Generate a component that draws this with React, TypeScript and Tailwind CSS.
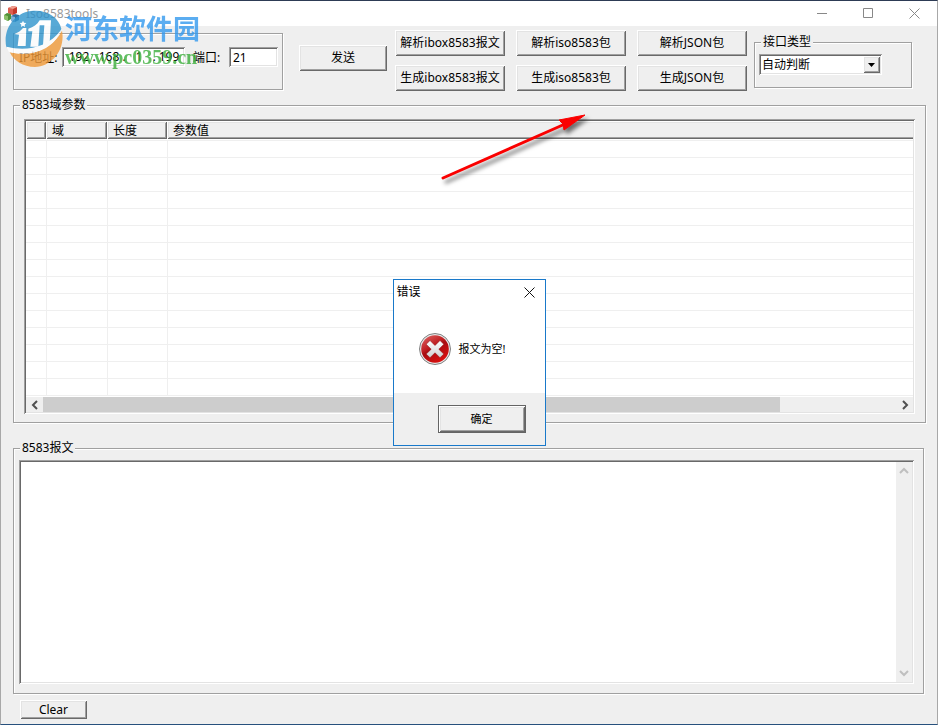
import React, { useState } from 'react';
import clsx from 'clsx';

const ROW_COUNT = 15;
const IFACE_TYPES = ['自动判断', 'ibox8583', 'iso8583', 'JSON'];

// classic 3D edges
const RAISED =
  'bg-[#efefef] shadow-[inset_1px_1px_#fff,inset_-1px_-1px_#696969,inset_2px_2px_#e3e3e3,inset_-2px_-2px_#a0a0a0]';
const SUNKEN =
  'bg-white shadow-[inset_1px_1px_#a0a0a0,inset_-1px_-1px_#fff,inset_2px_2px_#696969,inset_-2px_-2px_#e3e3e3]';
const ETCHED = 'border border-[#a0a0a0] shadow-[inset_1px_1px_#fff,1px_1px_#fff]';

type ButtonProps = React.ButtonHTMLAttributes<HTMLButtonElement>;

const PushButton: React.FC<ButtonProps> = ({ className, children, ...rest }) => (
  <button
    type="button"
    className={clsx('flex items-center justify-center whitespace-nowrap', RAISED, className)}
    {...rest}
  >
    {children}
  </button>
);

const GroupBox: React.FC<{ title?: string; className?: string; children: React.ReactNode }> = ({
  title,
  className,
  children,
}) => (
  <fieldset className={clsx('min-w-0', ETCHED, className)}>
    {title && <legend className="ml-[6px] h-4 bg-[#efefef] px-[2px] leading-4">{title}</legend>}
    {children}
  </fieldset>
);

const Chevron: React.FC<{ d: string; color: string }> = ({ d, color }) => (
  <svg width="10" height="10" viewBox="0 0 10 10" fill="none" stroke={color} strokeWidth="2">
    <path d={d} />
  </svg>
);

const AppIcon = () => (
  <svg width="16" height="16" viewBox="0 0 16 16" className="shrink-0">
    <path d="M4 2l5-2 4 1v6l-4 2-5-2z" fill="#c5382b" />
    <path d="M4 2l5 1v6L4 7z" fill="#dc5f50" />
    <path d="M4 2l5-2 4 1-4 2z" fill="#f0a090" />
    <path d="M0 9l3-2 4 1v5l-3 2-4-2z" fill="#4f8f35" />
    <path d="M0 9l4 1v5l-4-2z" fill="#8cc069" />
    <path d="M7 10l4-2 4 1v5l-4 2-4-1z" fill="#2f6c9e" />
    <path d="M7 10l4 1v5l-4-1z" fill="#7db0d8" />
  </svg>
);

const ErrorIcon = () => (
  <svg width="32" height="32" viewBox="0 0 32 32" className="shrink-0">
    <defs>
      <linearGradient id="err" x1="0" y1="0" x2="0.6" y2="1">
        <stop offset="0" stopColor="#e06a6a" />
        <stop offset="0.45" stopColor="#c01f22" />
        <stop offset="0.55" stopColor="#a80d10" />
        <stop offset="1" stopColor="#d81010" />
      </linearGradient>
      <linearGradient id="errx" x1="0" y1="0" x2="0" y2="1">
        <stop offset="0" stopColor="#ffffff" />
        <stop offset="1" stopColor="#cfcfcf" />
      </linearGradient>
    </defs>
    <circle cx="16" cy="16" r="15.5" fill="#e8e8e8" stroke="#808080" />
    <circle cx="16" cy="16" r="13.8" fill="url(#err)" />
    <path
      d="M11 7.5l5 5 5-5 3.8 3.8-5 4.9 5 4.9-3.8 3.6-5-4.9-5 4.9-3.8-3.6 5-4.9-5-4.9z"
      fill="url(#errx)"
      stroke="#8c1012"
      strokeWidth="0.5"
    />
  </svg>
);

const SiteLogo = () => (
  <svg width="58" height="58" viewBox="0 0 174 174" className="shrink-0">
    <path d="M86 2C130 0 162 24 169 56C160 84 138 104 110 114C76 124 40 120 4 112C-8 54 32 4 86 2z" fill="#2f94cd" />
    <path d="M171 62C182 120 140 170 90 171C54 171 26 152 14 126C76 142 142 118 171 62z" fill="#f09a38" />
    <path d="M28 72C40 68 48 62 54 54L64 54L62 108L38 108L42 74z" fill="#fff" />
    <path d="M70 56C86 52 96 44 104 31L138 31L134 98L114 106L118 46L104 46L100 110L76 110L82 64L70 64z" fill="#fff" />
    <path d="M4 110C60 124 126 116 168 60C146 122 74 142 12 126z" fill="#fff" />
    <path d="M54 32l3 6 7 1-5 5 1 7-6-4-6 4 1-7-5-5 7-1z" fill="#fff" />
  </svg>
);

const Watermark = () => (
  <div className="pointer-events-none absolute top-[9px] left-1 z-20 flex select-none opacity-80">
    <SiteLogo />
    <div className="ml-[2px] flex flex-col pt-px">
      <span className="h-9 text-[27px] leading-9 font-bold whitespace-nowrap text-[#3399ee]">河东软件园</span>
      <span className="font-['Liberation_Serif',serif] text-[20px] leading-5 font-bold text-[#3aae3a]">
        www.pc0359.cn
      </span>
    </div>
  </div>
);

const RedArrow = () => (
  <svg
    width="160"
    height="80"
    viewBox="0 0 160 80"
    className="pointer-events-none absolute top-[107px] left-[434px] z-10 drop-shadow-[3px_4px_2px_rgba(0,0,0,0.55)]"
  >
    <path d="M8 70L130 16" stroke="#fa0000" strokeWidth="3" strokeLinecap="round" />
    <path d="M150 7L124 12L128 16L129 22z" fill="#fa0000" stroke="#fa0000" strokeLinejoin="round" />
  </svg>
);

const TitleBar = () => (
  <header className="flex h-[25px] items-center bg-white pl-[3px] text-[#999]">
    <AppIcon />
    <h1 className="ml-[6px] flex-1">Iso8583tools</h1>
    <button type="button" aria-label="最小化" className="flex h-full w-[46px] items-center justify-center">
      <svg width="11" height="11" stroke="#888"><path d="M0 5.5H10" /></svg>
    </button>
    <button type="button" aria-label="最大化" className="flex h-full w-[46px] items-center justify-center">
      <svg width="11" height="11" stroke="#888" fill="none"><path d="M.5 .5H9.5V9.5H.5z" /></svg>
    </button>
    <button type="button" aria-label="关闭" className="flex h-full w-[46px] items-center justify-center">
      <svg width="11" height="11" stroke="#888"><path d="M.5 .5L10.5 10.5M10.5 .5L.5 10.5" /></svg>
    </button>
  </header>
);

const IpField = () => {
  const [octets, setOctets] = useState(['192', '168', '1', '199']);

  return (
    <div className={clsx('flex h-5 w-[123px] items-center p-[2px] pl-1', SUNKEN)}>
      {octets.map((octet, i) => (
        <React.Fragment key={i}>
          {i > 0 && <span className="w-1 text-center">.</span>}
          <input
            id={`ip-${i}`}
            aria-label={`IP ${i + 1}`}
            className="w-[26px] min-w-0 bg-transparent text-center leading-4 outline-none"
            maxLength={3}
            value={octet}
            onChange={e => setOctets(octets.map((o, n) => (n === i ? e.target.value : o)))}
          />
        </React.Fragment>
      ))}
    </div>
  );
};

const FieldTable = () => (
  <div className={clsx('p-[2px]', SUNKEN)}>
    <table className="mb-px w-full table-fixed border-separate border-spacing-0">
      <colgroup>
        <col className="w-5" />
        <col className="w-[61px]" />
        <col className="w-[60px]" />
        <col />
      </colgroup>
      <thead>
        <tr>
          {['', '域', '长度', '参数值'].map(name => (
            <th key={name} className="group overflow-hidden p-0 pb-px text-left font-normal">
              {/* the last column runs on past the visible area */}
              <div
                className={clsx(
                  'h-[18px] overflow-hidden pt-[2px] pl-[6px] leading-4 group-last:-mr-1',
                  RAISED,
                )}
              >
                {name}
              </div>
            </th>
          ))}
        </tr>
      </thead>
      <tbody>
        {Array.from({ length: ROW_COUNT }, (_, row) => (
          <tr key={row} className="group">
            {[0, 1, 2, 3].map(col => (
              <td
                key={col}
                className="h-[17px] border-t border-l border-[#efefef] p-0 first:border-l-0 group-last:h-[18px] group-last:border-b"
              />
            ))}
          </tr>
        ))}
      </tbody>
    </table>
    <div className="flex h-[15px] bg-[#efefef]">
      <button type="button" aria-label="向左滚动" className="flex w-[17px] items-center justify-center">
        <Chevron d="M7 1L3 5L7 9" color="#505050" />
      </button>
      <div className="flex-1">
        <div className="h-full w-[86.4%] bg-[#cdcdcd]" />
      </div>
      <button type="button" aria-label="向右滚动" className="flex w-[17px] items-center justify-center">
        <Chevron d="M3 1L7 5L3 9" color="#505050" />
      </button>
    </div>
  </div>
);

const ErrorDialog: React.FC<{ onClose: () => void }> = ({ onClose }) => (
  <div className="absolute inset-0 z-30 flex items-center justify-center">
    <div role="alertdialog" aria-labelledby="dlg-title" className="w-[153px] border border-[#1979ca] bg-white">
      <div className="flex h-6 items-center justify-between pl-[3px]">
        <h2 id="dlg-title">错误</h2>
        <button type="button" aria-label="关闭" className="flex h-6 w-[30px] items-center justify-center" onClick={onClose}>
          <svg width="11" height="11" stroke="#111"><path d="M.5 .5L10.5 10.5M10.5 .5L.5 10.5" /></svg>
        </button>
      </div>
      <div className="flex h-[89px] items-center gap-2 pl-[25px] text-[11px]">
        <ErrorIcon />
        <p>报文为空!</p>
      </div>
      <div className="flex justify-end bg-[#efefef] py-3 pr-[19px] text-[11px]">
        <div className="border border-[#646464]">
          <PushButton className="h-[26px] w-[86px]" onClick={onClose}>确定</PushButton>
        </div>
      </div>
    </div>
  </div>
);

const App: React.FC = () => {
  const [iface, setIface] = useState(IFACE_TYPES[0]);
  const [port, setPort] = useState('21');
  const [message, setMessage] = useState('');
  const [showError, setShowError] = useState(true);

  const submit = () => {
    if (!message) setShowError(true);
  };

  return (
    <div className="relative flex min-h-screen flex-col overflow-hidden border border-t-[#2d3b55] border-r-[#a8a8a8] border-b-[#27507d] border-l-[#a8a8a8] bg-[#efefef] font-['Noto_Sans','Noto_Sans_CJK_SC',sans-serif] text-[12px] leading-4 text-black">
      <TitleBar />

      <main className="flex flex-1 flex-col pr-[11px] pb-[5px] pl-3">
        <div className="flex items-start pt-1">
          <GroupBox className="mt-[3px] h-[57px] w-[270px]">
            <div className="flex items-center pt-[13px] pl-[5px]">
              <label htmlFor="ip-0" className="w-[43px] pt-[2px]">IP地址:</label>
              <IpField />
              <label htmlFor="port" className="ml-2 w-9 pt-[2px]">端口:</label>
              <input
                id="port"
                className={clsx('h-5 w-[49px] px-1 outline-none', SUNKEN)}
                value={port}
                onChange={e => setPort(e.target.value)}
              />
            </div>
          </GroupBox>

          <PushButton className="mt-[15px] ml-4 h-[26px] w-[88px]" onClick={submit}>发送</PushButton>

          <div className="ml-2 grid grid-cols-[110px_110px_110px] gap-x-[11px] gap-y-[9px]">
            {['解析ibox8583报文', '解析iso8583包', '解析JSON包', '生成ibox8583报文', '生成iso8583包', '生成JSON包'].map(
              label => (
                <PushButton key={label} className="h-[26px]" onClick={submit}>{label}</PushButton>
              ),
            )}
          </div>

          <GroupBox title="接口类型" className="mt-1 ml-[7px] h-[54px] w-[158px]">
            <div className={clsx('relative mt-1 ml-1 h-[21px] w-[123px] p-[2px]', SUNKEN)}>
              <select
                aria-label="接口类型"
                className="block h-full w-full appearance-none bg-transparent pl-px leading-4 outline-none"
                value={iface}
                onChange={e => setIface(e.target.value)}
              >
                {IFACE_TYPES.map(t => (
                  <option key={t}>{t}</option>
                ))}
              </select>
              <span
                className={clsx(
                  'pointer-events-none absolute inset-y-[2px] right-[2px] flex w-[17px] items-center justify-center',
                  RAISED,
                )}
              >
                <svg width="7" height="4"><path d="M0 0H7L3.5 4z" /></svg>
              </span>
            </div>
          </GroupBox>
        </div>

        <GroupBox title="8583域参数" className="mt-[6px]">
          <div className="px-[10px] pt-[6px] pb-2">
            <FieldTable />
          </div>
        </GroupBox>

        <GroupBox title="8583报文" className="mt-[17px] mr-[2px]">
          <div className="pt-1 pr-[9px] pb-[9px] pl-[5px]">
            <div className={clsx('flex h-[calc(100vh-501px)] min-h-20 p-[2px]', SUNKEN)}>
              <textarea
                aria-label="8583报文"
                className="flex-1 resize-none px-1 outline-none"
                value={message}
                onChange={e => setMessage(e.target.value)}
              />
              <div className="flex w-4 flex-col items-center justify-between bg-[#efefef] py-1">
                <button type="button" aria-label="向上滚动">
                  <Chevron d="M1 7L5 3L9 7" color="#bfbfbf" />
                </button>
                <button type="button" aria-label="向下滚动">
                  <Chevron d="M1 3L5 7L9 3" color="#bfbfbf" />
                </button>
              </div>
            </div>
          </div>
        </GroupBox>

        <PushButton className="mt-[6px] ml-[7px] h-[19px] w-[67px]" onClick={() => setMessage('')}>
          Clear
        </PushButton>
      </main>

      <RedArrow />
      <Watermark />
      {showError && <ErrorDialog onClose={() => setShowError(false)} />}
    </div>
  );
};

export default App;
